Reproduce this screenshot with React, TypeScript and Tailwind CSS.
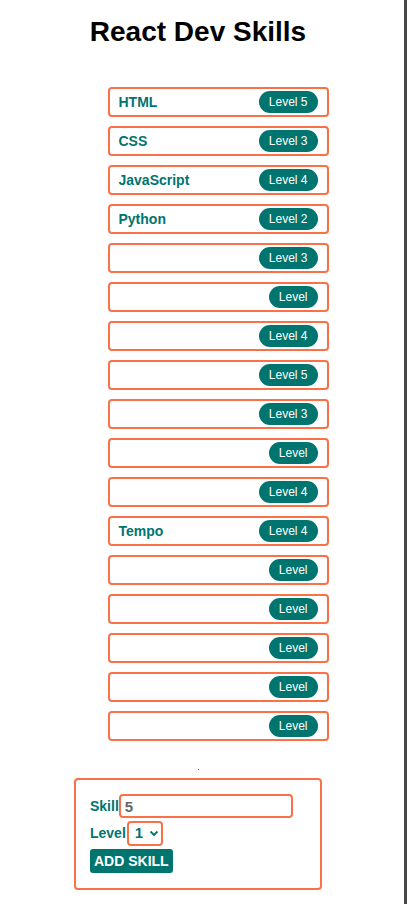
import React from "react";

const SKILLS: { name: string; level: string }[] = [
  { name: "HTML", level: "Level 5" },
  { name: "CSS", level: "Level 3" },
  { name: "JavaScript", level: "Level 4" },
  { name: "Python", level: "Level 2" },
  { name: "", level: "Level 3" },
  { name: "", level: "Level" },
  { name: "", level: "Level 4" },
  { name: "", level: "Level 5" },
  { name: "", level: "Level 3" },
  { name: "", level: "Level" },
  { name: "", level: "Level 4" },
  { name: "Tempo", level: "Level 4" },
  { name: "", level: "Level" },
  { name: "", level: "Level" },
  { name: "", level: "Level" },
  { name: "", level: "Level" },
  { name: "", level: "Level" },
];

const SkillItem = ({ name, level }: { name: string; level: string }) => (
  <li className="flex h-[30px] items-center justify-between rounded-[4px] border-2 border-[#fa7148] pl-[9px] pr-[9px]">
    <span className="text-[14px] font-bold text-[#00756f]">{name}</span>
    <span className="flex h-[22px] items-center rounded-full bg-[#00756f] px-[10px] text-[12px] text-white">
      {level}
    </span>
  </li>
);

const App = () => {
  return (
    <div
      className="flex min-h-screen bg-white"
      style={{ fontFamily: '"Liberation Sans", Arial, sans-serif' }}
    >
      <main className="flex w-[396px] flex-col items-center">
        <h1 className="mt-[16px] text-[28px] font-bold leading-[32px] text-black">
          React Dev Skills
        </h1>

        <ul className="mt-[39px] flex w-[261px] flex-col gap-[9px] pl-[40px]">
          {SKILLS.map((s, i) => (
            <SkillItem key={i} name={s.name} level={s.level} />
          ))}
        </ul>

        <span className="mt-[28px] h-px w-px bg-gray-500" />

        <form className="mt-[8px] flex w-[248px] flex-col items-start gap-[3px] rounded-[4px] border-2 border-[#fa7148] px-[14px] pb-[15px] pt-[14px]">
          <label className="flex items-center text-[14px] font-bold text-[#00756f]">
            Skill
            <input
              readOnly
              value="5"
              className="h-[24px] w-[174px] rounded-[4px] border-2 border-[#fa7148] px-[4px] text-[15px] font-bold text-[#666] outline-none"
            />
          </label>
          <label className="flex items-center text-[14px] font-bold text-[#00756f]">
            Level
            <span className="ml-px flex h-[25px] w-[36px] items-center gap-[6px] rounded-[4px] border-2 border-[#fa7148] pl-[6px] text-[15px] font-bold text-[#00756f]">
              1
              <svg width="10" height="7" viewBox="0 0 10 7" fill="none">
                <path d="M1.5 1.5 L5 5 L8.5 1.5" stroke="#00756f" strokeWidth="1.8" />
              </svg>
            </span>
          </label>
          <button
            type="button"
            className="h-[24px] rounded-[3px] bg-[#00756f] px-[4px] text-[14px] font-bold text-white"
          >
            ADD SKILL
          </button>
        </form>
      </main>
      <div className="w-[8px]" />
      <div className="w-[3px] bg-[#474747]" />
    </div>
  );
};

export default App;
